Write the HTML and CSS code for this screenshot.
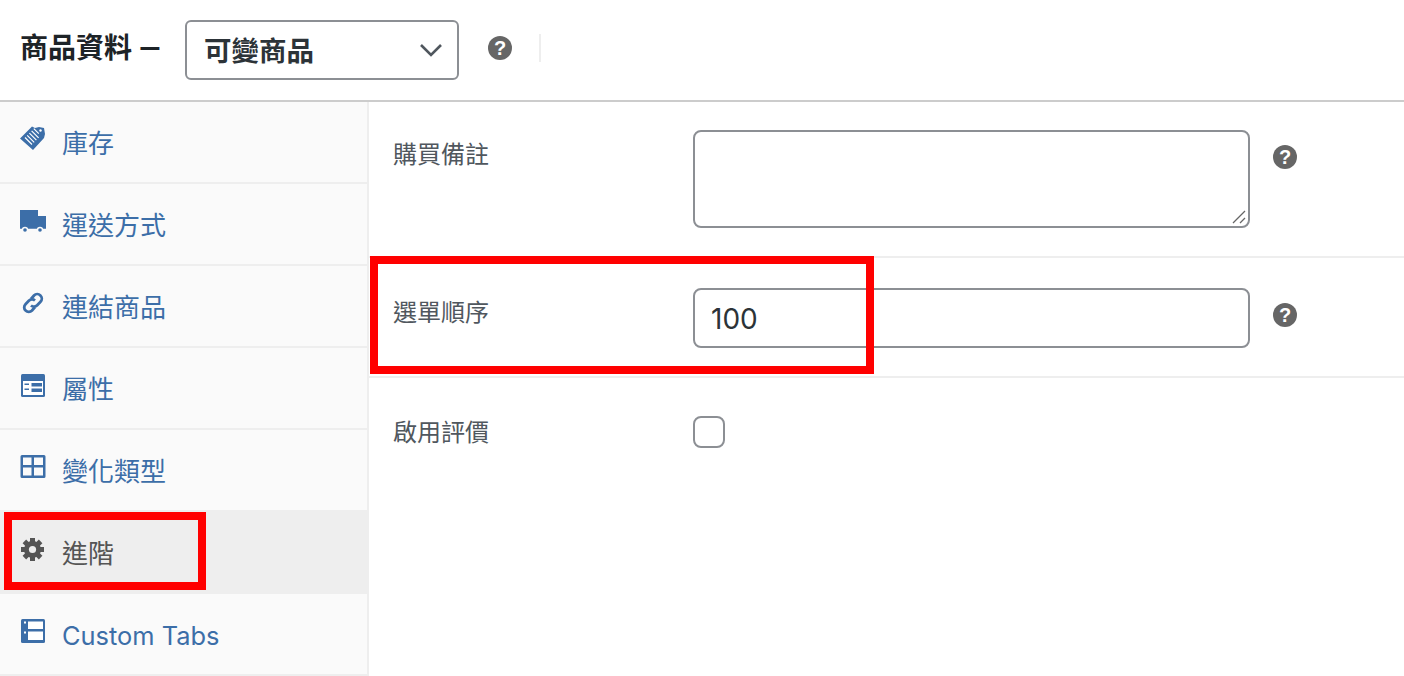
FILE: index.html
```html
<!DOCTYPE html>
<html lang="zh-Hant">
<head>
    <meta charset="UTF-8">
    <title>商品資料</title>
    <link rel="stylesheet" href="styles.css">
</head>
<body>
    <header class="topbar">
        <h2 class="title">商品資料 —</h2>
        <div class="type-select">
            <span>可變商品</span>
            <svg class="chevron" viewBox="0 0 24 14"><path d="M2 2l10 10L22 2" fill="none" stroke="#50575e" stroke-width="2.6"/></svg>
        </div>
        <span class="help help-top">?</span>
        <span class="sep"></span>
    </header>

    <div class="panel">
        <nav class="tabs">
            <a class="tab">
                <svg class="icon" viewBox="0 0 26 26">
                    <path d="M0 12.500L12 .5l3 1.500 4-1 5 1 1 6-1 4L13 24z" fill="#3c6ea8"/>
                    <path d="M5 11.500l7 7M7.200 9.300l7 7M9.400 7.100l7 7M11.600 4.900l7 7M13.800 2.700l5 5" stroke="#fff" stroke-width="1.200" fill="none"/>
                    <circle cx="20.500" cy="4.500" r="1.200" fill="#fff"/>
                </svg>
                <span>庫存</span>
            </a>
            <a class="tab">
                <svg class="icon" viewBox="0 0 26 26">
                    <path d="M0 2h18v6h8v12.700H0z" fill="#3c6ea8"/>
                    <circle cx="5" cy="22" r="3.200" fill="#fafafa"/>
                    <circle cx="20" cy="22" r="3.200" fill="#fafafa"/>
                    <circle cx="5" cy="22" r="1.800" fill="#3c6ea8"/>
                    <circle cx="20" cy="22" r="1.800" fill="#3c6ea8"/>
                </svg>
                <span>運送方式</span>
            </a>
            <a class="tab">
                <svg class="icon" viewBox="0 0 26 26">
                    <g fill="none" stroke="#3c6ea8" stroke-width="2.800">
                        <path d="M11 9l3-3.500a4.500 4.500 0 0 1 6.500 6.300l-3.300 3.400a4.500 4.500 0 0 1-6.200.3"/>
                        <path d="M15 17l-3 3.500a4.500 4.500 0 0 1-6.500-6.300l3.300-3.400a4.500 4.500 0 0 1 6.200-.3"/>
                    </g>
                </svg>
                <span>連結商品</span>
            </a>
            <a class="tab">
                <svg class="icon" viewBox="0 0 26 26">
                    <rect x="1" y="2" width="24" height="23" rx="1.500" fill="#3c6ea8"/>
                    <rect x="3" y="9" width="20" height="14" fill="#fff"/>
                    <path d="M11.500 11h10.500v3.500H11.500zM11.500 16.500h10.500v3.500H11.500zM4.500 11.500H9V13H4.500zM4.500 16.500H9V18H4.500z" fill="#3c6ea8"/>
                </svg>
                <span>屬性</span>
            </a>
            <a class="tab">
                <svg class="icon" viewBox="0 0 26 26"><path fill-rule="evenodd" d="M2 1h22a1.500 1.500 0 0 1 1.500 1.500v20A1.500 1.500 0 0 1 24 24H2a1.500 1.500 0 0 1-1.500-1.500v-20A1.500 1.500 0 0 1 2 1zM3 3.500v7.500h8.500V3.500zM14 3.500v7.500h9V3.500zM3 13.500v8h8.500v-8zM14 13.500v8h9v-8z" fill="#3c6ea8"/></svg>
                <span>變化類型</span>
            </a>
            <a class="tab active">
                <svg class="icon" viewBox="0 0 26 26">
                    <g fill="#555">
                        <rect x="10" y="2" width="5" height="23"/>
                        <rect x="10" y="2" width="5" height="23" transform="rotate(45 12.500 13.500)"/>
                        <rect x="10" y="2" width="5" height="23" transform="rotate(90 12.500 13.500)"/>
                        <rect x="10" y="2" width="5" height="23" transform="rotate(135 12.500 13.500)"/>
                        <circle cx="12.500" cy="13.500" r="8.500"/>
                    </g>
                    <circle cx="12.500" cy="13.500" r="3.600" fill="#eee"/>
                </svg>
                <span>進階</span>
            </a>
            <a class="tab">
                <svg class="icon" viewBox="0 0 26 26">
                    <rect x="1" y="1" width="24" height="24" rx="1.500" fill="#3c6ea8"/>
                    <path d="M8 3.500h15V11H8zM8 13.500h15V22H8zM4 3.500h2v2H4zM4 13.500h2v2H4z" fill="#fff"/>
                </svg>
                <span class="tab-latin">Custom Tabs</span>
            </a>
        </nav>

        <main class="fields">
            <div class="field field-note">
                <label>購買備註</label>
                <div class="note-box">
                    <svg class="grip" viewBox="0 0 14 14"><path d="M1 13L13 1M8 13l5-5" stroke="#666" stroke-width="1.300" fill="none"/></svg>
                </div>
                <span class="help">?</span>
            </div>
            <div class="field field-order">
                <label>選單順序</label>
                <div class="num-box">100</div>
                <span class="help">?</span>
            </div>
            <div class="field field-review">
                <label>啟用評價</label>
                <span class="check"></span>
            </div>
        </main>
    </div>

    <div class="mark mark-tab"></div>
    <div class="mark mark-order"></div>
</body>
</html>
```

FILE: styles.css
```css
* {
    box-sizing: border-box;
}
html, body {
    margin: 0;
    height: 676px;
    overflow: hidden;
}
body {
    position: relative;
    background: #fff;
    color: #50575e;
    font-family: Inter, "Noto Sans CJK TC", sans-serif;
    font-size: 26px;
}
.topbar {
    display: flex;
    align-items: center;
    height: 102px;
    padding: 0 0 0 20px;
    border-bottom: 2px solid #ccc;
}
.title {
    margin: -2px 21px 0 0;
    font-family: Roboto, "Noto Sans CJK TC", sans-serif;
    font-size: 28px;
    font-weight: 700;
    color: #1d2327;
    white-space: nowrap;
    line-height: 1;
    width: 144px;
}
.type-select {
    display: flex;
    align-items: center;
    justify-content: space-between;
    width: 274px;
    height: 60px;
    padding: 0 14px 0 17px;
    border: 2px solid #8c8f94;
    border-radius: 6px;
    font-size: 27.5px;
    font-weight: 700;
    color: #2c3338;
}
.type-select span {
    margin-top: -3px;
}
.chevron {
    width: 24px;
    height: 14px;
}
.help {
    display: flex;
    align-items: center;
    justify-content: center;
    flex: none;
    width: 24px;
    height: 24px;
    border-radius: 50%;
    background: #666;
    color: #fff;
    font-family: "Liberation Sans", sans-serif;
    font-size: 20px;
    font-weight: 700;
    line-height: 1;
}
.help-top {
    margin: -4px 0 0 29px;
}
.sep {
    width: 2px;
    height: 28px;
    margin: -4px 0 0 27px;
    background: #eee;
}
.panel {
    display: flex;
    height: 574px;
}
.tabs {
    flex: none;
    width: 369px;
    background: #fafafa;
    border-right: 2px solid #eee;
}
.tab {
    display: flex;
    align-items: center;
    gap: 16px;
    height: 82px;
    padding: 4px 0 0 20px;
    border-bottom: 2px solid #eee;
    color: #3c6ea8;
    line-height: 1;
}
.tab:nth-child(5) {
    height: 80px;
    border-bottom: none;
}
.tab.active {
    height: 84px;
    background: #eee;
    color: #555;
    border-bottom: none;
}
.tab-latin {
    font-size: 25.4px;
}
.icon {
    flex: none;
    width: 26px;
    height: 26px;
    margin-top: -10px;
}
.fields {
    flex: 1;
}
.field {
    display: flex;
    align-items: flex-start;
    padding-left: 24px;
    border-bottom: 2px solid #eee;
}
.field label {
    flex: none;
    width: 300px;
    line-height: 1;
    font-size: 24px;
    color: #50575e;
}
.field-note {
    height: 156px;
    padding-top: 28px;
}
.field-note label {
    margin-top: 13px;
}
.field-order {
    height: 120px;
    padding-top: 30px;
}
.field-order label {
    margin-top: 13px;
}
.field-review {
    border-bottom: none;
    padding-top: 38px;
}
.field-review label {
    margin-top: 5px;
}
.note-box, .num-box {
    position: relative;
    width: 557px;
    border: 2px solid #8c8f94;
    border-radius: 8px;
    background: #fff;
}
.note-box {
    height: 98px;
}
.num-box {
    height: 60px;
    padding-left: 16px;
    line-height: 58px;
    font-size: 28px;
    color: #2c3338;
}
.grip {
    position: absolute;
    right: 2px;
    bottom: 2px;
    width: 14px;
    height: 14px;
}
.field .help {
    margin: 15px 0 0 23px;
}
.check {
    width: 32px;
    height: 32px;
    border: 2px solid #8c8f94;
    border-radius: 8px;
    background: #fff;
}
.mark {
    position: absolute;
    border: 8px solid #f00;
    pointer-events: none;
}
.mark-tab {
    left: 4px;
    top: 512px;
    width: 202px;
    height: 78px;
}
.mark-order {
    left: 370px;
    top: 256px;
    width: 504px;
    height: 118px;
}
```
